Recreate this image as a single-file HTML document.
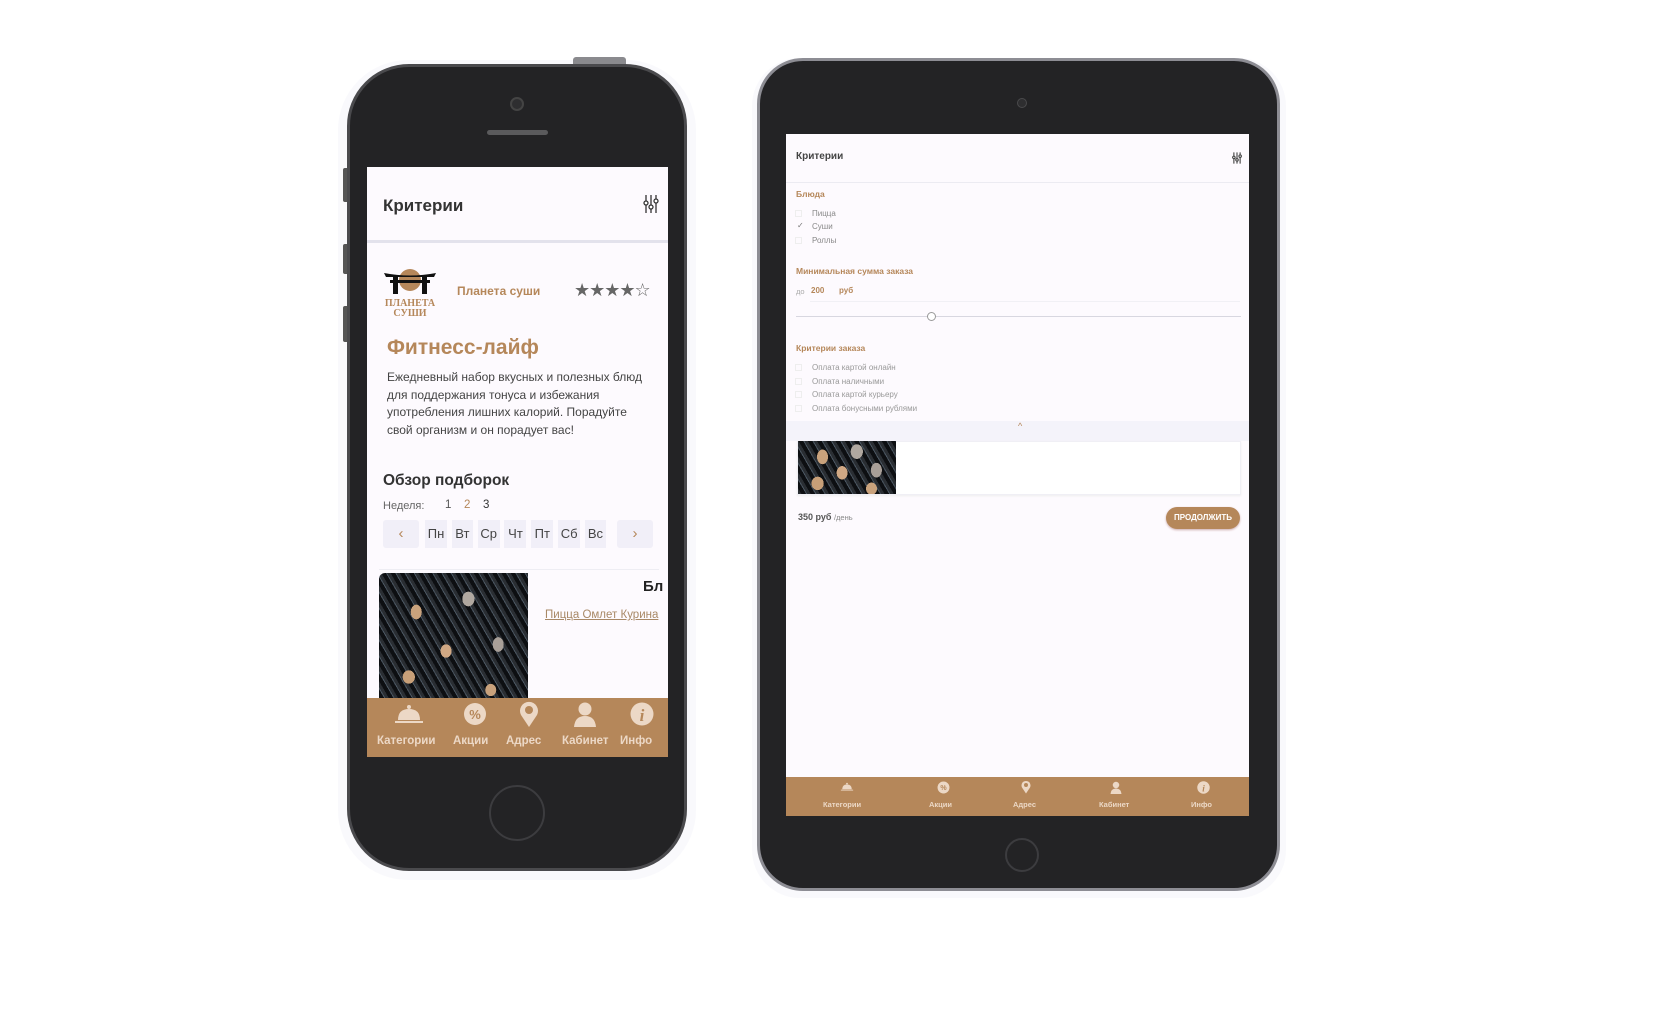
<!DOCTYPE html>
<html><head><meta charset="utf-8"><style>
*{margin:0;padding:0;box-sizing:border-box}
body{width:1656px;height:1026px;background:#fff;position:relative;overflow:hidden;font-family:"Liberation Sans","DejaVu Sans",sans-serif}
.a{position:absolute}
.t{position:absolute;white-space:nowrap;line-height:1}
.nav{background:#b5875a}
.lbl{color:#ecd8c6;font-weight:bold}
.pine{background:
radial-gradient(ellipse 9px 12px at 25% 30%,#c9a27c 60%,transparent 62%),
radial-gradient(ellipse 10px 12px at 60% 20%,#b0a8a0 60%,transparent 62%),
radial-gradient(ellipse 9px 11px at 45% 60%,#d0a884 60%,transparent 62%),
radial-gradient(ellipse 9px 12px at 80% 55%,#a89f98 60%,transparent 62%),
radial-gradient(ellipse 10px 11px at 20% 80%,#c79f78 60%,transparent 62%),
radial-gradient(ellipse 9px 10px at 75% 90%,#c9a27c 60%,transparent 62%),
repeating-linear-gradient(60deg,#2a2e33 0 3px,#0d0f12 3px 7px,#4a5560 7px 8px),
#111}
</style></head><body>

<!-- PHONE -->
<div class="a" style="left:338px;top:60px;width:358px;height:820px;border-radius:70px;background:#f7f6fb;opacity:.7"></div>
<div class="a" style="left:573px;top:57px;width:53px;height:8px;background:#8a8a8e;border-radius:3px 3px 0 0"></div>
<div class="a" style="left:343px;top:168px;width:6px;height:34px;background:#555;border-radius:2px"></div>
<div class="a" style="left:343px;top:244px;width:6px;height:30px;background:#555;border-radius:2px"></div>
<div class="a" style="left:343px;top:306px;width:6px;height:36px;background:#555;border-radius:2px"></div>
<div class="a" style="left:347px;top:64px;width:340px;height:807px;border-radius:62px;background:#232325;border:3px solid #4a4a4d"></div>
<div class="a" style="left:510px;top:97px;width:14px;height:14px;border-radius:50%;background:#2e2e30;border:2px solid #444"></div>
<div class="a" style="left:487px;top:130px;width:61px;height:5px;border-radius:3px;background:#5a5a5c"></div>
<div class="a" style="left:489px;top:785px;width:56px;height:56px;border-radius:50%;border:2px solid #3c3c3f"></div>

<div class="a" style="left:367px;top:167px;width:301px;height:590px;background:#fdfafe;overflow:hidden">
  <div class="a" style="left:0;top:0;width:301px;height:76px;background:#fdfafe;border-bottom:3px solid #e3e2ec"></div>
  <div class="t" style="left:16px;top:30px;font-size:17px;font-weight:bold;color:#333">Критерии</div>
  <svg class="a" style="left:276px;top:28px" width="16" height="18" viewBox="0 0 16 18"><g stroke="#333" stroke-width="1.3" fill="#fff"><line x1="3" y1="0" x2="3" y2="18"/><line x1="8" y1="0" x2="8" y2="18"/><line x1="13" y1="0" x2="13" y2="18"/><circle cx="3" cy="8" r="2"/><circle cx="8" cy="12" r="2"/><circle cx="13" cy="6" r="2"/></g></svg>
  <!-- logo -->
  <svg class="a" style="left:15px;top:100px" width="56" height="52" viewBox="0 0 56 52"><circle cx="28" cy="13" r="11" fill="#b5875a"/><path d="M2 6 Q28 11 54 6 L52 10 L4 10Z" fill="#111"/><rect x="8" y="13" width="40" height="3" fill="#111"/><rect x="11" y="10" width="5" height="17" fill="#111"/><rect x="40" y="10" width="5" height="17" fill="#111"/><text x="28" y="39" font-size="10" font-weight="bold" font-family="Liberation Serif" fill="#b5875a" text-anchor="middle">ПЛАНЕТА</text><text x="28" y="49" font-size="10" font-weight="bold" font-family="Liberation Serif" fill="#b5875a" text-anchor="middle">СУШИ</text></svg>
  <div class="t" style="left:90px;top:118px;font-size:12px;font-weight:bold;color:#b5875a">Планета суши</div>
  <div class="t" style="left:207px;top:114px;font-size:18px;color:#666;letter-spacing:-1px">★★★★☆</div>
  <div class="t" style="left:20px;top:170px;font-size:21px;font-weight:bold;color:#b5875a">Фитнесс-лайф</div>
  <div class="a" style="left:20px;top:202px;width:262px;font-size:12px;line-height:17.5px;color:#444">Ежедневный набор вкусных и полезных блюд для поддержания тонуса и избежания употребления лишних калорий. Порадуйте свой организм и он порадует вас!</div>
  <div class="t" style="left:16px;top:306px;font-size:15.5px;font-weight:bold;color:#333">Обзор подборок</div>
  <div class="t" style="left:16px;top:334px;font-size:11px;color:#666">Неделя:</div>
  <div class="t" style="left:78px;top:333px;font-size:11.5px;color:#555">1</div>
  <div class="t" style="left:97px;top:333px;font-size:11.5px;color:#b5875a">2</div>
  <div class="t" style="left:116px;top:333px;font-size:11.5px;color:#333">3</div>
  <div class="a" style="left:16px;top:353px;width:36px;height:28px;background:#f1eff8;border-radius:3px;color:#b5875a;font-size:15px;text-align:center;line-height:28px">‹</div>
  <div class="a" style="left:58px;top:353px;width:181px;height:28px;font-size:13px;color:#444;display:flex;justify-content:space-between">
    <span style="background:#f1eff8;width:22px;text-align:center;line-height:28px">Пн</span><span style="background:#f1eff8;width:21px;text-align:center;line-height:28px">Вт</span><span style="background:#f1eff8;width:22px;text-align:center;line-height:28px">Ср</span><span style="background:#f1eff8;width:22px;text-align:center;line-height:28px">Чт</span><span style="background:#f1eff8;width:22px;text-align:center;line-height:28px">Пт</span><span style="background:#f1eff8;width:22px;text-align:center;line-height:28px">Сб</span><span style="background:#f1eff8;width:21px;text-align:center;line-height:28px">Вс</span>
  </div>
  <div class="a" style="left:250px;top:353px;width:36px;height:28px;background:#f1eff8;border-radius:3px;color:#b5875a;font-size:15px;text-align:center;line-height:28px">›</div>
  <div class="a" style="left:12px;top:402px;width:280px;height:1px;background:#eeedf3"></div>
  <div class="a pine" style="left:12px;top:406px;width:149px;height:130px;border-radius:6px 0 0 0"></div>
  <div class="t" style="left:276px;top:412px;font-size:15px;font-weight:bold;color:#222">Бл</div>
  <div class="t" style="left:178px;top:443px;font-size:11.5px;color:#a88866;text-decoration:underline">Пицца Омлет Курина</div>
  <div class="a nav" style="left:0;top:531px;width:301px;height:59px">
    <svg class="a" style="left:26px;top:6px" width="32" height="24" viewBox="0 0 32 24"><circle cx="16" cy="3" r="2" fill="#ecd8c6"/><path d="M5 16 Q5 5 16 5 Q27 5 27 16Z" fill="#ecd8c6"/><rect x="2" y="17" width="28" height="2" fill="#ecd8c6"/></svg>
    <svg class="a" style="left:96px;top:4px" width="24" height="24" viewBox="0 0 24 24"><circle cx="12" cy="12" r="11" fill="#ecd8c6"/><text x="12" y="17" font-size="13" font-weight="bold" text-anchor="middle" fill="#b5875a" font-family="Liberation Sans">%</text></svg>
    <svg class="a" style="left:152px;top:3px" width="20" height="26" viewBox="0 0 20 26"><path d="M10 26 L2 14 A9 9 0 1 1 18 14Z" fill="#ecd8c6"/><circle cx="10" cy="9" r="4" fill="#b5875a"/></svg>
    <svg class="a" style="left:206px;top:3px" width="24" height="26" viewBox="0 0 24 26"><circle cx="12" cy="8" r="6.5" fill="#ecd8c6"/><path d="M1 26 Q2 15 12 15 Q22 15 23 26Z" fill="#ecd8c6"/></svg>
    <svg class="a" style="left:263px;top:4px" width="24" height="24" viewBox="0 0 24 24"><circle cx="12" cy="12" r="11.5" fill="#ecd8c6"/><text x="12" y="19" font-size="17" font-weight="bold" font-style="italic" text-anchor="middle" fill="#b5875a" font-family="Liberation Serif">i</text></svg>
    <div class="t lbl" style="left:10px;top:38px;font-size:11.5px">Категории</div>
    <div class="t lbl" style="left:86px;top:38px;font-size:11.5px">Акции</div>
    <div class="t lbl" style="left:139px;top:38px;font-size:11.5px">Адрес</div>
    <div class="t lbl" style="left:195px;top:38px;font-size:11.5px">Кабинет</div>
    <div class="t lbl" style="left:253px;top:38px;font-size:11.5px">Инфо</div>
  </div>
</div>

<!-- TABLET -->
<div class="a" style="left:752px;top:58px;width:534px;height:840px;border-radius:48px;background:#f7f6fb;opacity:.7"></div>
<div class="a" style="left:757px;top:58px;width:523px;height:833px;border-radius:46px;background:#232325;border:3px solid #8d8d94"></div>
<div class="a" style="left:1017px;top:98px;width:10px;height:10px;border-radius:50%;background:#2e2e30;border:1px solid #4a4a4c"></div>
<div class="a" style="left:1005px;top:838px;width:34px;height:34px;border-radius:50%;border:2px solid #3c3c3f"></div>

<div class="a" style="left:786px;top:134px;width:463px;height:682px;background:#fdfafe;overflow:hidden">
  <div class="t" style="left:10px;top:18px;font-size:10px;font-weight:bold;color:#444">Критерии</div>
  <svg class="a" style="left:446px;top:18px" width="10" height="12" viewBox="0 0 16 18"><g stroke="#444" stroke-width="1.8" fill="#fff"><line x1="3" y1="0" x2="3" y2="18"/><line x1="8" y1="0" x2="8" y2="18"/><line x1="13" y1="0" x2="13" y2="18"/><circle cx="3" cy="8" r="2"/><circle cx="8" cy="12" r="2"/><circle cx="13" cy="6" r="2"/></g></svg>
  <div class="a" style="left:0;top:48px;width:463px;height:1px;background:#ecebf2"></div>
  <div class="t" style="left:10px;top:56px;font-size:8.5px;font-weight:bold;color:#b5875a">Блюда</div>
  <div class="a" style="left:9px;top:76px;width:7px;height:7px;border:1px solid #eee"></div>
  <div class="t" style="left:11px;top:88px;font-size:8px;color:#777">✓</div>
  <div class="a" style="left:9px;top:103px;width:7px;height:7px;border:1px solid #eee"></div>
  <div class="t" style="left:26px;top:76px;font-size:8px;color:#888">Пицца</div>
  <div class="t" style="left:26px;top:89px;font-size:8px;color:#888">Суши</div>
  <div class="t" style="left:26px;top:103px;font-size:8px;color:#888">Роллы</div>
  <div class="t" style="left:10px;top:133px;font-size:8.5px;font-weight:bold;color:#b5875a">Минимальная сумма заказа</div>
  <div class="t" style="left:10px;top:154px;font-size:7.5px;color:#aaa">до</div>
  <div class="t" style="left:25px;top:153px;font-size:8px;font-weight:bold;color:#b5875a">200</div>
  <div class="t" style="left:53px;top:153px;font-size:8px;font-weight:bold;color:#b5875a">руб</div>
  <div class="a" style="left:24px;top:167px;width:430px;height:1px;background:#f1f0f5"></div>
  <div class="a" style="left:10px;top:182px;width:445px;height:1px;background:#d8d7e0"></div>
  <div class="a" style="left:141px;top:178px;width:9px;height:9px;border-radius:50%;border:1px solid #999;background:#fff"></div>
  <div class="t" style="left:10px;top:210px;font-size:8.5px;font-weight:bold;color:#b5875a">Критерии заказа</div>
  <div class="a" style="left:9px;top:230px;width:7px;height:7px;border:1px solid #eee"></div>
  <div class="a" style="left:9px;top:244px;width:7px;height:7px;border:1px solid #eee"></div>
  <div class="a" style="left:9px;top:257px;width:7px;height:7px;border:1px solid #eee"></div>
  <div class="a" style="left:9px;top:271px;width:7px;height:7px;border:1px solid #eee"></div>
  <div class="t" style="left:26px;top:230px;font-size:8px;color:#999">Оплата картой онлайн</div>
  <div class="t" style="left:26px;top:244px;font-size:8px;color:#999">Оплата наличными</div>
  <div class="t" style="left:26px;top:257px;font-size:8px;color:#999">Оплата картой курьеру</div>
  <div class="t" style="left:26px;top:271px;font-size:8px;color:#999">Оплата бонусными рублями</div>
  <div class="a" style="left:0;top:287px;width:463px;height:20px;background:#f4f3fa"></div>
  <div class="t" style="left:232px;top:288px;font-size:9px;color:#b5875a">^</div>
  <div class="a" style="left:11px;top:307px;width:444px;height:54px;background:#fff;border:1px solid #f0eff5;box-shadow:0 1px 2px #eee"></div>
  <div class="a pine" style="left:12px;top:307px;width:98px;height:53px"></div>
  <div class="t" style="left:12px;top:379px;font-size:9px;font-weight:bold;color:#555">350 руб <span style="font-weight:normal;font-size:7.5px;color:#888">/день</span></div>
  <div class="a" style="left:380px;top:373px;width:74px;height:22px;border-radius:11px;background:#b5875a;color:#fff;font-size:8px;font-weight:bold;text-align:center;line-height:22px;box-shadow:0 1px 2px #caa">ПРОДОЛЖИТЬ</div>
  <div class="a nav" style="left:0;top:643px;width:463px;height:39px">
    <svg class="a" style="left:54px;top:5px" width="14" height="11" viewBox="0 0 32 24"><circle cx="16" cy="3" r="2" fill="#ecd8c6"/><path d="M5 16 Q5 5 16 5 Q27 5 27 16Z" fill="#ecd8c6"/><rect x="2" y="17" width="28" height="2" fill="#ecd8c6"/></svg>
    <svg class="a" style="left:151px;top:4px" width="13" height="13" viewBox="0 0 24 24"><circle cx="12" cy="12" r="11" fill="#ecd8c6"/><text x="12" y="17" font-size="13" font-weight="bold" text-anchor="middle" fill="#b5875a" font-family="Liberation Sans">%</text></svg>
    <svg class="a" style="left:235px;top:3px" width="10" height="14" viewBox="0 0 20 26"><path d="M10 26 L2 14 A9 9 0 1 1 18 14Z" fill="#ecd8c6"/><circle cx="10" cy="9" r="4" fill="#b5875a"/></svg>
    <svg class="a" style="left:324px;top:3px" width="12" height="15" viewBox="0 0 24 26"><circle cx="12" cy="8" r="6.5" fill="#ecd8c6"/><path d="M1 26 Q2 15 12 15 Q22 15 23 26Z" fill="#ecd8c6"/></svg>
    <svg class="a" style="left:411px;top:4px" width="13" height="13" viewBox="0 0 24 24"><circle cx="12" cy="12" r="11.5" fill="#ecd8c6"/><text x="12" y="19" font-size="17" font-weight="bold" font-style="italic" text-anchor="middle" fill="#b5875a" font-family="Liberation Serif">i</text></svg>
    <div class="t lbl" style="left:37px;top:24px;font-size:7.5px">Категории</div>
    <div class="t lbl" style="left:143px;top:24px;font-size:7.5px">Акции</div>
    <div class="t lbl" style="left:227px;top:24px;font-size:7.5px">Адрес</div>
    <div class="t lbl" style="left:313px;top:24px;font-size:7.5px">Кабинет</div>
    <div class="t lbl" style="left:405px;top:24px;font-size:7.5px">Инфо</div>
  </div>
</div>
</body></html>
